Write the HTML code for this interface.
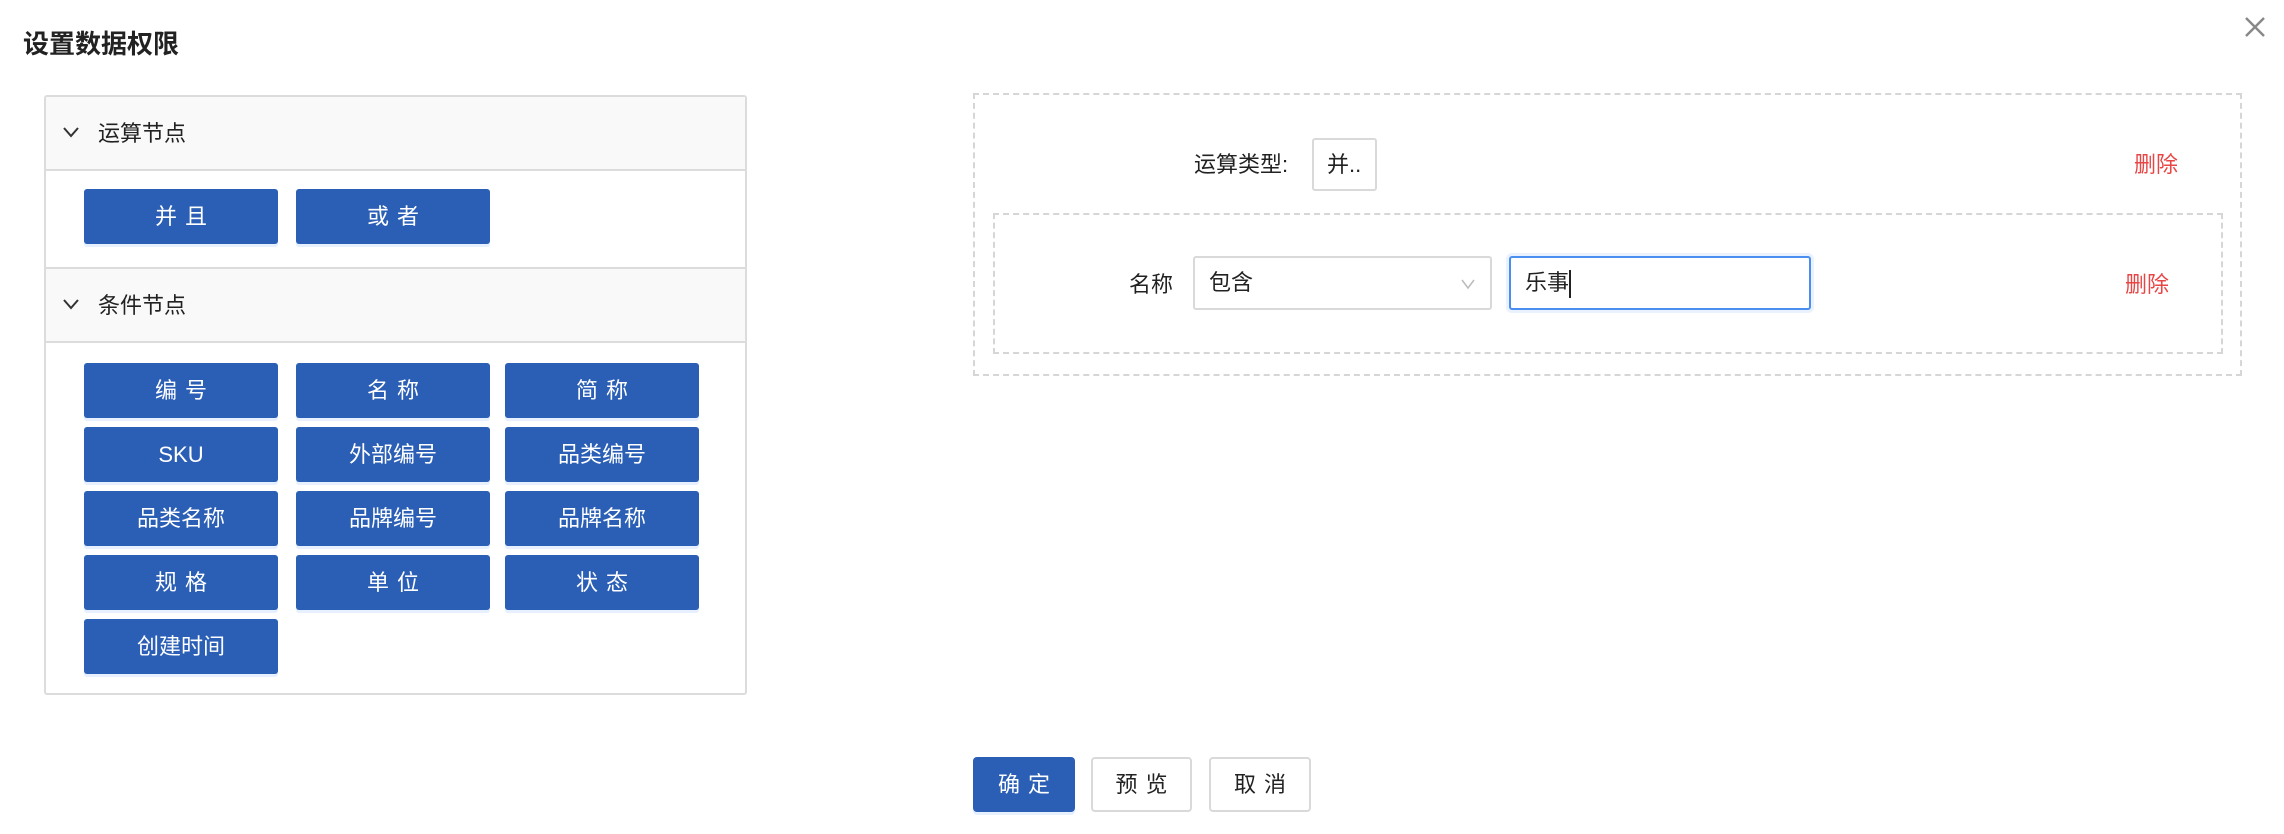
<!DOCTYPE html>
<html><head><meta charset="utf-8"><style>
*{box-sizing:border-box;margin:0;padding:0}
body{width:2284px;height:834px;background:#fff;position:relative;overflow:hidden;font-family:"Liberation Sans","Noto Sans CJK SC",sans-serif;color:#222}
.a{position:absolute}
.title{left:23px;top:28px;font-size:26px;font-weight:bold;line-height:32px}
.panel{left:44px;top:95px;width:703px;height:600px;border:2px solid #dcdcdc;border-radius:3px}
.hd{position:absolute;left:0;right:0;background:#f9f9f9;border-bottom:2px solid #dcdcdc;font-size:22px;line-height:74px;padding-left:52px}
.hd svg{position:absolute;left:16px;top:29px}
.btn{position:absolute;width:194px;height:55px;background:#2b5fb6;color:#fff;border-radius:3px;font-size:22px;text-align:center;line-height:55px;box-shadow:0 3px 0 #e6f0ff}
.ls{letter-spacing:8px;text-indent:8px}
.dash{border:2px dashed #d6d6d6}
.lbl{font-size:22px;line-height:30px}
.del{color:#e84545;font-size:22px;line-height:30px}
.sel{border:2px solid #d9d9d9;border-radius:3px;background:#fff;font-size:22px;line-height:50px;padding-left:14px}
.fb{position:absolute;top:757px;height:55px;border-radius:4px;font-size:22px;text-align:center;line-height:52px;letter-spacing:8px;text-indent:8px}
</style></head><body>
<div class="a title">设置数据权限</div>
<svg class="a" style="left:2244px;top:16px" width="22" height="22" viewBox="0 0 22 22"><path d="M2 2L20 20M20 2L2 20" stroke="#888" stroke-width="2.4"/></svg>

<div class="a panel">
 <div class="hd" style="top:0;height:74px"><svg width="18" height="12" viewBox="0 0 18 12"><path d="M2 2L9 10L16 2" fill="none" stroke="#333" stroke-width="2"/></svg>运算节点</div>
 <div class="btn ls" style="left:38px;top:92px">并且</div>
 <div class="btn ls" style="left:250px;top:92px">或者</div>
 <div class="hd" style="top:170px;height:76px;border-top:2px solid #dcdcdc"><svg width="18" height="12" viewBox="0 0 18 12"><path d="M2 2L9 10L16 2" fill="none" stroke="#333" stroke-width="2"/></svg>条件节点</div>
 <div class="btn ls" style="left:38px;top:266px">编号</div>
 <div class="btn ls" style="left:250px;top:266px">名称</div>
 <div class="btn ls" style="left:459px;top:266px">简称</div>
 <div class="btn" style="left:38px;top:330px">SKU</div>
 <div class="btn" style="left:250px;top:330px">外部编号</div>
 <div class="btn" style="left:459px;top:330px">品类编号</div>
 <div class="btn" style="left:38px;top:394px">品类名称</div>
 <div class="btn" style="left:250px;top:394px">品牌编号</div>
 <div class="btn" style="left:459px;top:394px">品牌名称</div>
 <div class="btn ls" style="left:38px;top:458px">规格</div>
 <div class="btn ls" style="left:250px;top:458px">单位</div>
 <div class="btn ls" style="left:459px;top:458px">状态</div>
 <div class="btn" style="left:38px;top:522px">创建时间</div>
</div>

<div class="a dash" style="left:973px;top:93px;width:1269px;height:283px"></div>
<div class="a lbl" style="left:1194px;top:150px">运算类型:</div>
<div class="a sel" style="left:1312px;top:138px;width:65px;height:53px;padding-left:13px">并..</div>
<div class="a del" style="left:2134px;top:150px">删除</div>
<div class="a dash" style="left:993px;top:213px;width:1230px;height:141px"></div>
<div class="a lbl" style="left:1129px;top:270px">名称</div>
<div class="a sel" style="left:1193px;top:256px;width:299px;height:54px">包含
 <svg style="position:absolute;right:14px;top:20px" width="16" height="12" viewBox="0 0 16 12"><path d="M2 2L8 10L14 2" fill="none" stroke="#bbb" stroke-width="1.5"/></svg></div>
<div class="a sel" style="left:1509px;top:256px;width:302px;height:54px;border-color:#4a8ff0;box-shadow:0 0 0 3px #eaf2ff">乐事<span style="display:inline-block;width:2px;height:28px;background:#222;vertical-align:middle"></span></div>
<div class="a del" style="left:2125px;top:270px">删除</div>

<div class="fb" style="left:973px;width:102px;background:#2b5fb6;color:#fff;line-height:55px;box-shadow:0 3px 0 #e6f0ff">确定</div>
<div class="fb" style="left:1091px;width:101px;border:2px solid #d9d9d9;color:#222">预览</div>
<div class="fb" style="left:1209px;width:102px;border:2px solid #d9d9d9;color:#222">取消</div>
</body></html>
